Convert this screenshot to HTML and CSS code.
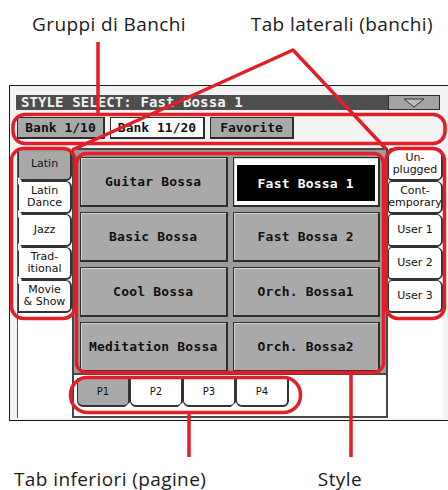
FILE: index.html
```html
<!DOCTYPE html>
<html lang="it">
<head>
<meta charset="UTF-8" />
<meta name="viewport" content="width=device-width, initial-scale=1" />
<title>Style Select</title>
<link rel="stylesheet" href="styles.css">
</head>
<body>

<div class="captions top">
  <span class="cap-groups">Gruppi di Banchi</span>
  <span class="cap-side">Tab laterali (banchi)</span>
</div>

<div class="screen">
  <div class="titlebar">
    <div class="title">STYLE SELECT: Fast Bossa 1</div>
    <div class="menu">
      <svg width="22" height="10" viewBox="0 0 22 10"><polygon points="1,1 21,1 11,9" fill="#bdbdbd" stroke="#333" stroke-width="1" /></svg>
    </div>
  </div>

  <div class="banks">
    <div class="bank b1">Bank 1/10</div>
    <div class="bank b2 on">Bank 11/20</div>
    <div class="bank b3">Favorite</div>
  </div>

  <div class="main">
    <div class="side left">
      <div class="tab on">Latin</div>
      <div class="tab">Latin<br>Dance</div>
      <div class="tab">Jazz</div>
      <div class="tab">Trad-<br>itional</div>
      <div class="tab">Movie<br>&amp; Show</div>
    </div>

    <div class="center">
      <div class="styles">
        <div class="style">Guitar Bossa</div>
        <div class="style on"><span>Fast Bossa 1</span></div>
        <div class="style">Basic Bossa</div>
        <div class="style">Fast Bossa 2</div>
        <div class="style">Cool Bossa</div>
        <div class="style">Orch. Bossa1</div>
        <div class="style">Meditation Bossa</div>
        <div class="style">Orch. Bossa2</div>
      </div>
      <div class="pages">
        <div class="page on">P1</div>
        <div class="page">P2</div>
        <div class="page">P3</div>
        <div class="page">P4</div>
      </div>
    </div>

    <div class="side right">
      <div class="tab">Un-<br>plugged</div>
      <div class="tab">Cont-<br>emporary</div>
      <div class="tab">User 1</div>
      <div class="tab">User 2</div>
      <div class="tab">User 3</div>
    </div>
  </div>
</div>

<div class="captions bottom">
  <span class="cap-pages">Tab inferiori (pagine)</span>
  <span class="cap-style">Style</span>
</div>

<!-- richiami rossi sopra lo schermo -->
<svg class="callouts" width="448" height="490" viewBox="0 0 448 490">
  <rect x="13" y="114.5" width="432" height="29" rx="12" />
  <rect x="11.5" y="148.5" width="63.5" height="170" rx="12" />
  <rect x="76.5" y="153.5" width="307" height="219" rx="10" />
  <rect x="386" y="148.5" width="58.5" height="170" rx="12" />
  <rect x="70.5" y="377.5" width="230" height="35" rx="17" />
  <line x1="98" y1="42" x2="98" y2="114" />
  <polyline points="72,150 293,50 386,149" />
  <line x1="189" y1="413" x2="189" y2="457" />
  <line x1="351" y1="372" x2="351" y2="457" />
</svg>

</body>
</html>
```

FILE: styles.css
```css
html, body {
  margin: 0;
}
body {
  width: 448px;
  height: 490px;
  overflow: hidden;
  position: relative;
  background: #fff;
  font-family: "Open Sans", sans-serif;
  color: #111;
}

.captions {
  display: flex;
  font-size: 19px;
  line-height: 24px;
  letter-spacing: 0.4px;
  color: #1a1a1a;
  white-space: nowrap;
}
.captions.top {
  height: 85px;
  box-sizing: border-box;
  padding-top: 12px;
}
.cap-groups {
  margin-left: 32px;
}
.cap-side {
  margin-left: auto;
  margin-right: 15px;
}
.captions.bottom {
  padding-top: 46px;
}
.cap-pages {
  margin-left: 14px;
}
.cap-style {
  margin-left: auto;
  margin-right: 86px;
}

/* schermo */
.screen {
  margin-left: 9px;
  width: 442px;
  height: 336px;
  box-sizing: border-box;
  border: 1px solid #1a1a1a;
  background: #f3f3f3;
  padding: 9px 0 0 6px;
}
.titlebar {
  display: flex;
  width: 424px;
  height: 15px;
}
.title {
  flex: 1;
  background: #4e4e4e;
  color: #f2f2f2;
  font: bold 14px/15px "DejaVu Sans Mono", monospace;
  letter-spacing: 0.1px;
  padding-left: 5px;
  white-space: nowrap;
}
.menu {
  width: 52px;
  box-sizing: border-box;
  border: 1px solid #2e2e2e;
  background: #a3a3a3;
  display: flex;
  align-items: center;
  justify-content: center;
}

.banks {
  display: flex;
  gap: 5px;
  margin-top: 7px;
  padding-left: 1px;
}
.bank {
  height: 22px;
  box-sizing: border-box;
  border: 1px solid #2c2c2c;
  border-right-width: 2px;
  border-bottom-width: 2px;
  background: #a8a8a8;
  font: bold 13px/19px "DejaVu Sans Mono", monospace;
  text-align: center;
}
.bank.on {
  background: #fff;
}
.b1 { width: 88px; }
.b2 { width: 95px; }
.b3 { width: 84px; }

.main {
  display: flex;
  margin-top: 9px;
  height: 270px;
}
.side {
  width: 55px;
  background: #fff;
  box-sizing: border-box;
}
.side.left {
  margin-left: 1px;
  border-left: 1px solid #555;
}
.tab {
  position: relative;
  height: 33px;
  box-sizing: border-box;
  border: 1px solid #333;
  border-right-width: 2px;
  border-bottom-width: 2px;
  border-radius: 0 6px 6px 0;
  background: #fff;
  display: flex;
  align-items: center;
  justify-content: center;
  text-align: center;
  font: 11px/12px "DejaVu Sans", sans-serif;
}
.side.right .tab {
  border-radius: 4px 6px 6px 4px;
}
.tab.on {
  background: #a8a8a8;
}
/* piccole tacche bianche tra le linguette */
.side.left .tab + .tab::before {
  content: "";
  position: absolute;
  left: -1px;
  top: -5px;
  border: 4px solid transparent;
  border-left: 4px solid #fff;
  border-right: 0;
}
.side.right .tab + .tab::before {
  content: "";
  position: absolute;
  right: -2px;
  top: -5px;
  border: 4px solid transparent;
  border-right: 4px solid #fff;
  border-left: 0;
}

.center {
  width: 316px;
  display: flex;
  flex-direction: column;
}
.styles {
  display: grid;
  grid-template-columns: 1fr 1fr;
  grid-auto-rows: 50px;
  gap: 5px;
  padding: 7px 6px 1px 6px;
  border: 2px solid #474747;
  background: #9c9c9c;
}
.style {
  box-sizing: border-box;
  border: 1px solid #2e2e2e;
  border-right-width: 2px;
  border-bottom-width: 2px;
  box-shadow: inset 1px 1px 0 #d4d4d4;
  background: #a9a9a9;
  display: flex;
  align-items: center;
  justify-content: center;
  font: bold 13px "DejaVu Sans Mono", monospace;
  letter-spacing: 0.2px;
  white-space: nowrap;
}
.style.on {
  background: #fff;
  padding: 7px 3px 4px 3px;
  align-items: stretch;
}
.style.on span {
  flex: 1;
  background: #000;
  color: #fff;
  display: flex;
  align-items: center;
  justify-content: center;
}

.pages {
  display: flex;
  height: 38px;
  border: 2px solid #474747;
  border-top: 0;
  background: #fff;
  padding: 3px 0 0 3px;
}
.page {
  position: relative;
  width: 53px;
  height: 29px;
  box-sizing: border-box;
  border: 1px solid #333;
  border-right-width: 2px;
  border-bottom-width: 2px;
  border-radius: 0 0 6px 6px;
  background: #fff;
  font: 10px/26px "DejaVu Sans", sans-serif;
  text-align: center;
}
.page.on {
  background: #a8a8a8;
}
.page + .page::before {
  content: "";
  position: absolute;
  left: -6px;
  bottom: -2px;
  border: 4px solid transparent;
  border-bottom: 4px solid #fff;
  border-top: 0;
}

.callouts {
  position: absolute;
  top: 0;
  left: 0;
  pointer-events: none;
  fill: none;
  stroke: #e31e26;
  stroke-width: 3.5;
  stroke-linejoin: round;
}
```
